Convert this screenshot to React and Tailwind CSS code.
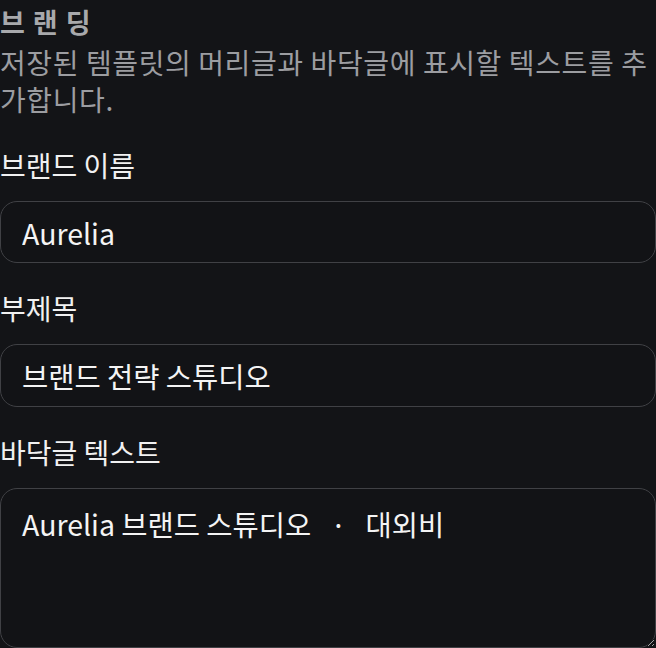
import React from "react";

export default function App() {
  const font = { fontFamily: '"Noto Sans CJK KR", "Noto Sans", sans-serif' };
  return (
    <div className="min-h-screen w-[656px] bg-[#131417] text-[#ececec]" style={font}>
      <div className="flex flex-col">
        <h2 className="h-[42px] text-[27px] leading-[44px] font-bold tracking-[8px] text-[#a8a9ac]">브랜딩</h2>
        <p className="mt-[2px] text-[28px] leading-[37px] tracking-[0.6px] text-[#9c9da1]">
          저장된 템플릿의 머리글과 바닥글에 표시할 텍스트를 추가합니다.
        </p>
        <label className="mt-[29px] block text-[28px] leading-[36px] text-[#f1f1f1]">브랜드 이름</label>
        <input
          readOnly
          value="Aurelia"
          className="mt-[18px] h-[62px] w-full rounded-[17px] border border-[#404145] bg-[#121316] px-[21px] text-[28.5px] text-[#f4f4f4] outline-none"
          style={font}
        />
        <label className="mt-[27px] block text-[28px] leading-[36px] text-[#f1f1f1]">부제목</label>
        <input
          readOnly
          value="브랜드 전략 스튜디오"
          className="mt-[18px] h-[63px] w-full rounded-[17px] border border-[#404145] bg-[#121316] px-[21px] text-[28.5px] text-[#f4f4f4] outline-none"
          style={font}
        />
        <label className="mt-[27px] block text-[28px] leading-[36px] text-[#f1f1f1]">바닥글 텍스트</label>
        <textarea
          readOnly
          value={"Aurelia 브랜드 스튜디오   ·   대외비"}
          className="mt-[18px] h-[160px] w-full rounded-[17px] border border-[#404145] bg-[#121316] px-[21px] py-[15px] text-[28.5px] leading-[40px] text-[#f4f4f4] outline-none"
          style={font}
        />
      </div>
    </div>
  );
}
